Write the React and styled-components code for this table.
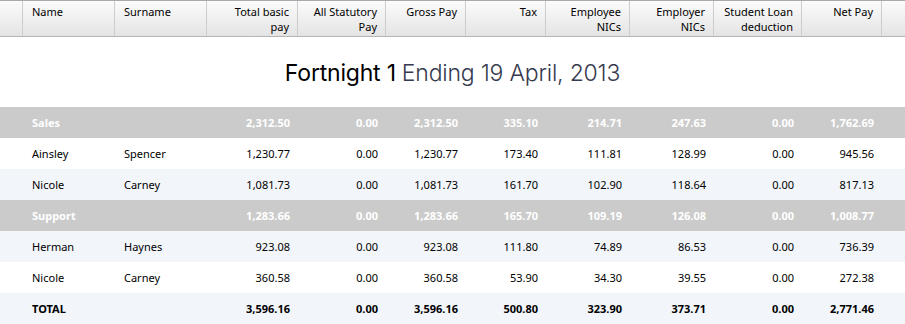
import React from 'react'
import styled, { createGlobalStyle } from 'styled-components'

const GlobalStyle = createGlobalStyle`
  html, body {
    margin: 0;
    padding: 0;
    background: #fff;
  }
`;

const COLS = '23px 92px 92px 91px 88px 80px 80px 84px 84px 88px 80px 1fr';

const columns = [
  { label: ['Name'], left: true },
  { label: ['Surname'], left: true },
  { label: ['Total basic', 'pay'] },
  { label: ['All Statutory', 'Pay'] },
  { label: ['Gross Pay'] },
  { label: ['Tax'] },
  { label: ['Employee', 'NICs'] },
  { label: ['Employer', 'NICs'] },
  { label: ['Student Loan', 'deduction'] },
  { label: ['Net Pay'] },
];

const rows = [
  { kind: 'group', cells: ['Sales', '', '2,312.50', '0.00', '2,312.50', '335.10', '214.71', '247.63', '0.00', '1,762.69'] },
  { kind: 'plain', cells: ['Ainsley', 'Spencer', '1,230.77', '0.00', '1,230.77', '173.40', '111.81', '128.99', '0.00', '945.56'] },
  { kind: 'alt', cells: ['Nicole', 'Carney', '1,081.73', '0.00', '1,081.73', '161.70', '102.90', '118.64', '0.00', '817.13'] },
  { kind: 'group', cells: ['Support', '', '1,283.66', '0.00', '1,283.66', '165.70', '109.19', '126.08', '0.00', '1,008.77'] },
  { kind: 'alt', cells: ['Herman', 'Haynes', '923.08', '0.00', '923.08', '111.80', '74.89', '86.53', '0.00', '736.39'] },
  { kind: 'plain', cells: ['Nicole', 'Carney', '360.58', '0.00', '360.58', '53.90', '34.30', '39.55', '0.00', '272.38'] },
  { kind: 'total', cells: ['TOTAL', '', '3,596.16', '0.00', '3,596.16', '500.80', '323.90', '373.71', '0.00', '2,771.46'] },
];

export default function App() {
  return (
    <Page>
      <GlobalStyle />
      <HeaderBar>
        <HeadCell />
        {columns.map((c, i) => (
          <HeadCell key={i} $left={c.left}>
            {c.label.map((l, j) => <div key={j}>{l}</div>)}
          </HeadCell>
        ))}
        <HeadCell $last />
      </HeaderBar>

      <Title>
        <Strong>Fortnight 1</Strong> <Light>Ending 19 April, 2013</Light>
      </Title>

      {rows.map((r, i) => (
        <Row key={i} $kind={r.kind}>
          <span />
          {r.cells.map((v, j) => (
            <Cell key={j} $left={j < 2}>{v}</Cell>
          ))}
          <span />
        </Row>
      ))}
    </Page>
  )
}

const Page = styled.div`
  width: 905px;
  font-family: "Noto Sans", "Liberation Sans", sans-serif;
  color: #000;
`;

const HeaderBar = styled.div`
  display: grid;
  grid-template-columns: ${COLS};
  height: 37px;
  box-sizing: border-box;
  border-top: 1px solid #a9a9a9;
  border-bottom: 1px solid #b4b4b4;
  background: linear-gradient(#fbfbfb, #ebebeb 70%, #e4e4e4);
`;

const HeadCell = styled.div`
  box-sizing: border-box;
  padding: 3px 8px 0 ${p => (p.$left ? '9px' : '4px')};
  text-align: ${p => (p.$left ? 'left' : 'right')};
  font-size: 11px;
  line-height: 15px;
  border-right: ${p => (p.$last ? 'none' : '1px solid #cdcdcd')};
  white-space: nowrap;
`;

const Title = styled.div`
  height: 70px;
  display: flex;
  align-items: center;
  justify-content: center;
  padding-top: 2px;
  box-sizing: border-box;
  font-family: Inter, "Liberation Sans", sans-serif;
  font-size: 23px;
  letter-spacing: -0.2px;
`;

const Strong = styled.span`
  font-weight: 400;
  color: #000;
  margin-right: 6px;
`;

const Light = styled.span`
  font-weight: 300;
  color: #363a4e;
`;

const rowBg = {
  group: '#cbcbcb',
  plain: '#ffffff',
  alt: '#f2f5fa',
  total: '#f2f5fa',
};

const Row = styled.div`
  display: grid;
  grid-template-columns: ${COLS};
  height: 31px;
  align-items: center;
  background: ${p => rowBg[p.$kind]};
  color: ${p => (p.$kind === 'group' ? '#fff' : '#000')};
  font-weight: ${p => (p.$kind === 'group' || p.$kind === 'total' ? 700 : 400)};
  font-size: 11px;
`;

const Cell = styled.div`
  padding: 0 8px 0 ${p => (p.$left ? '9px' : '0')};
  text-align: ${p => (p.$left ? 'left' : 'right')};
  white-space: nowrap;
`;
